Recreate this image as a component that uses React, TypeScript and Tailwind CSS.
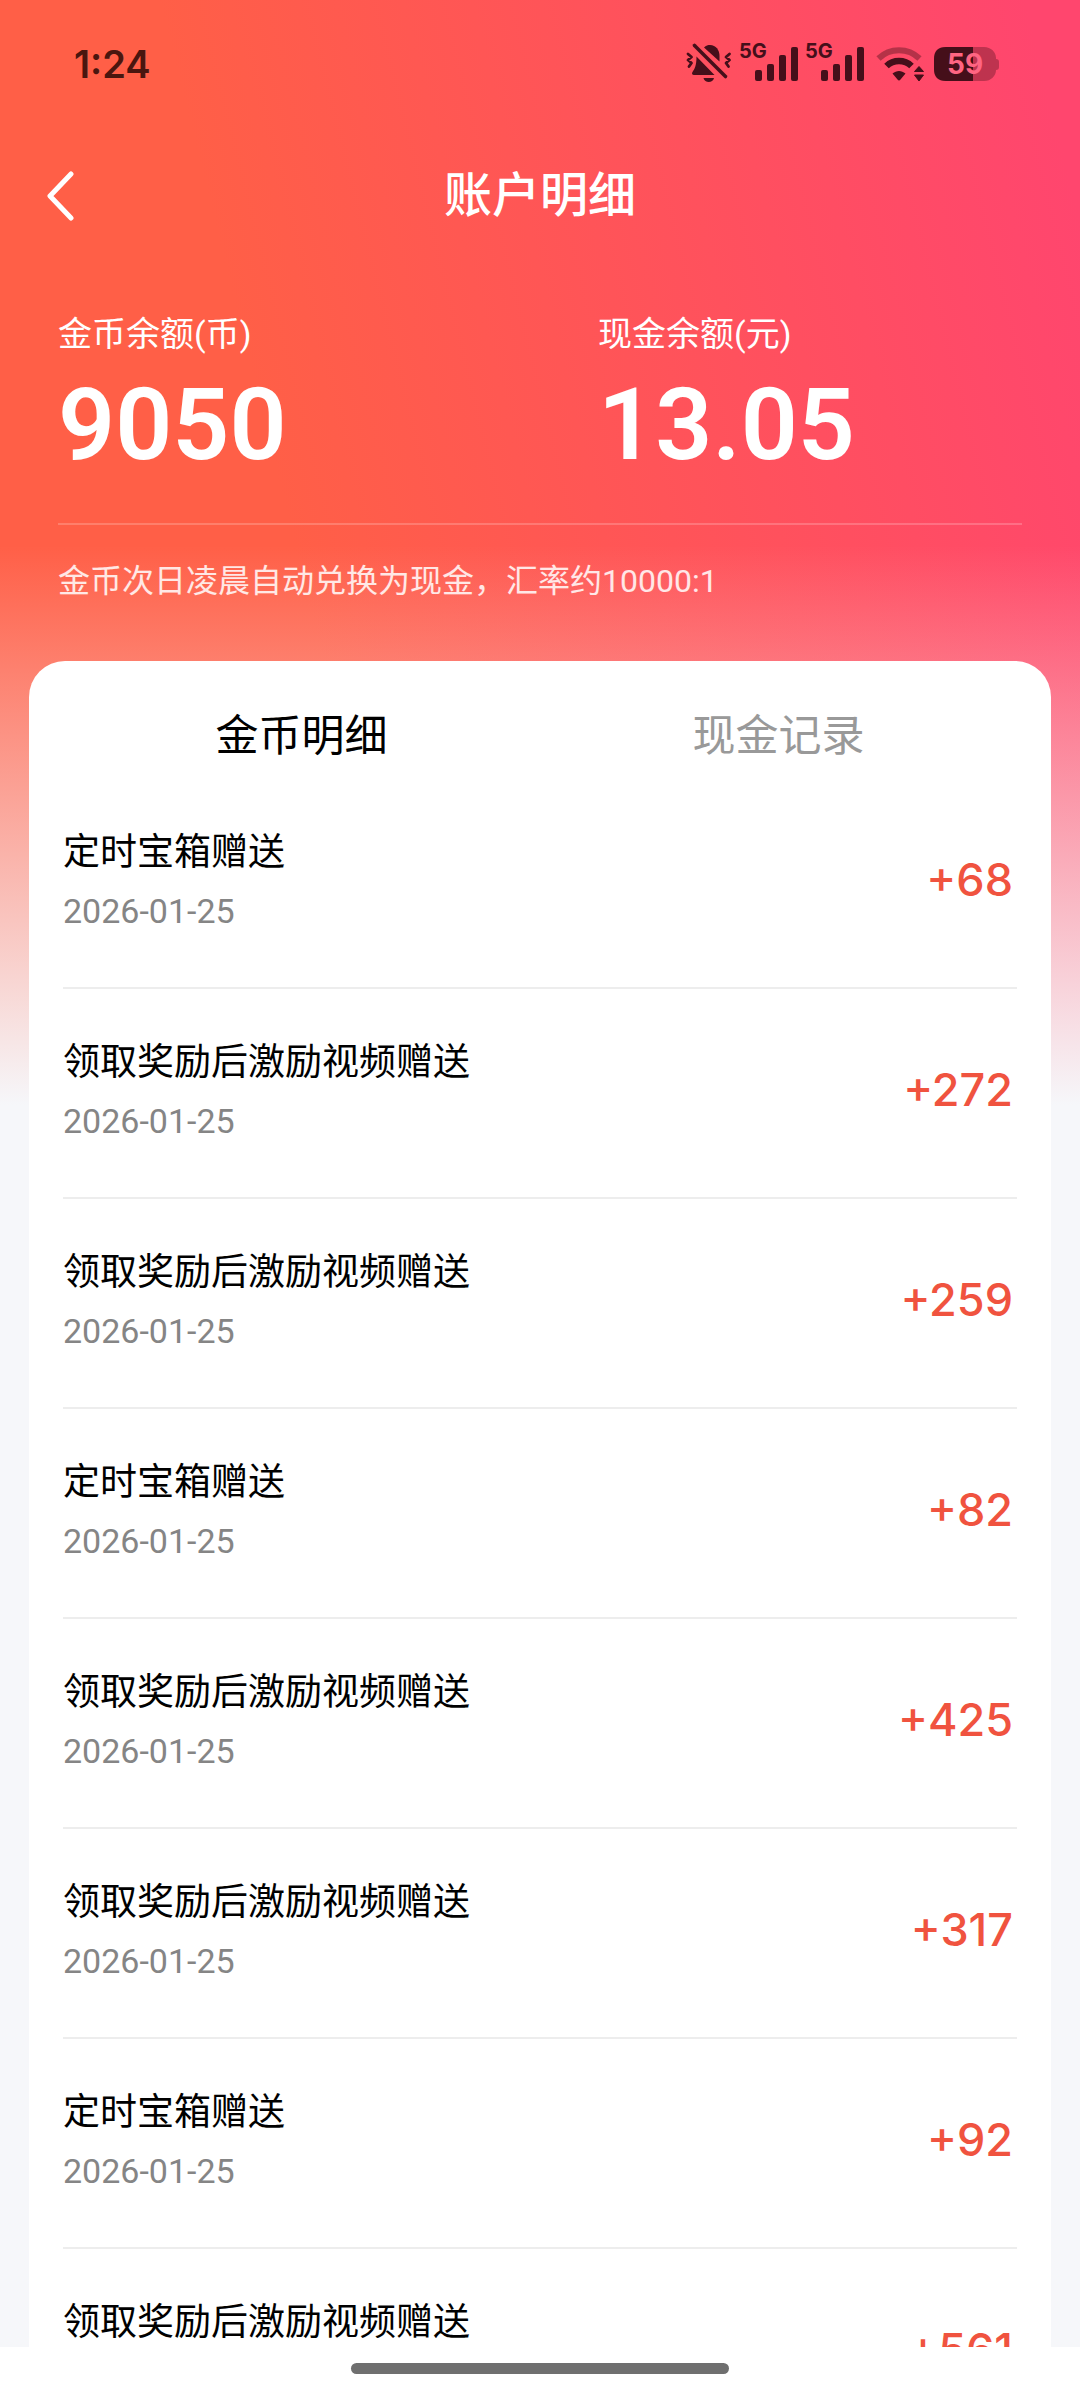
import { useState } from "react"

interface LedgerEntry {
  id: number
  title: string
  date: string
  amount: number
}

const COIN_ENTRIES: LedgerEntry[] = [
  { id: 1, title: "定时宝箱赠送", date: "2026-01-25", amount: 68 },
  { id: 2, title: "领取奖励后激励视频赠送", date: "2026-01-25", amount: 272 },
  { id: 3, title: "领取奖励后激励视频赠送", date: "2026-01-25", amount: 259 },
  { id: 4, title: "定时宝箱赠送", date: "2026-01-25", amount: 82 },
  { id: 5, title: "领取奖励后激励视频赠送", date: "2026-01-25", amount: 425 },
  { id: 6, title: "领取奖励后激励视频赠送", date: "2026-01-25", amount: 317 },
  { id: 7, title: "定时宝箱赠送", date: "2026-01-25", amount: 92 },
  { id: 8, title: "领取奖励后激励视频赠送", date: "2026-01-25", amount: 561 },
]

const TABS = [
  { key: "coin", label: "金币明细" },
  { key: "cash", label: "现金记录" },
]

function MutedBellIcon() {
  return (
    <svg width="46" height="40" viewBox="0 0 46 40" fill="currentColor" aria-hidden="true">
      <path d="M18 5.5C20 3.5 22 3 24 3c6 0 9.500 5 9.500 11v5.500z" />
      <path d="M10.500 14.500 28.500 33H8c-2 0-2.500-1.500-1.500-3 2-3 4-6 4-15.500z" />
      <path d="M17.500 36h10.500c-1 5.300-9.500 5.300-10.500 0z" />
      <g fill="none" stroke="currentColor" strokeLinecap="round" strokeLinejoin="round">
        <path d="M8.500 3.500 39.500 34.500" strokeWidth="3.600" />
        <path d="M2 12l3.500 3-3.500 3 3.500 3-2.500 3.500M43.500 12l-3.500 3 3.500 3-3.500 3 2.500 3.500" strokeWidth="2.800" />
      </g>
    </svg>
  )
}

function SignalIcon() {
  return (
    <svg width="58" height="40" viewBox="0 0 58 40" fill="currentColor" className="overflow-visible" aria-label="5G">
      <text x="-1" y="16" className="font-['Inter'] text-[20px] font-bold">
        5G
      </text>
      <rect x="15" y="28" width="7" height="11" rx="2" />
      <rect x="27" y="22" width="7" height="17" rx="2" />
      <rect x="39" y="13" width="7" height="26" rx="2" />
      <rect x="51" y="5" width="7" height="34" rx="2" />
    </svg>
  )
}

function WifiIcon() {
  return (
    <svg width="48" height="40" viewBox="0 0 48 40" aria-hidden="true">
      <path d="M2.500 16.500a29.500 29.500 0 0 1 41 0" fill="none" stroke="currentColor" strokeOpacity="0.400" strokeWidth="6" />
      <path d="M10.500 24a18 18 0 0 1 25 0" fill="none" stroke="currentColor" strokeWidth="6.500" />
      <path d="M16.500 31.500c4-3.500 9-3.500 13 0l-5 6c-1 1.200-2 1.200-3 0z" fill="currentColor" />
      <path d="M38.500 29.500 43 24.500l4.500 5zM38.500 33h9L43 39z" fill="currentColor" stroke="currentColor" strokeLinejoin="round" />
    </svg>
  )
}

function BatteryIcon() {
  return (
    <svg width="66" height="40" viewBox="0 0 66 40" aria-label="59%">
      <path d="M12 5h38c7 0 12 5 12 11v1c2 0 3 1 3 3v5c0 2-1 3-3 3 0 6-5 11-12 11H12C4 39 0 35 0 27V17C0 9 4 5 12 5z" fill="currentColor" fillOpacity="0.350" />
      <path d="M39 5H12C4 5 0 9 0 17v10c0 8 4 12 12 12h27z" fill="currentColor" />
      <text x="13" y="32" fill="#ff6582" className="font-['Inter'] text-[28px] font-bold">
        59
      </text>
    </svg>
  )
}

function StatusBar() {
  return (
    <div className="flex items-center justify-between pt-[39px] pr-20 pl-[74px]">
      <span className="pt-1 font-['Inter'] text-[38px] leading-[42px] font-semibold text-[#4a160f]">1:24</span>
      <div className="flex items-center gap-2 text-[#450f1a]">
        <MutedBellIcon />
        <SignalIcon />
        <SignalIcon />
        <div className="ml-1 flex gap-[10px]">
          <WifiIcon />
          <BatteryIcon />
        </div>
      </div>
    </div>
  )
}

interface BalanceProps {
  label: string
  value: string
}

function Balance({ label, value }: BalanceProps) {
  return (
    <div className="flex flex-1 flex-col pl-[58px]">
      <span className="text-[34px] leading-[50px]">{label}</span>
      <span className="mt-[10px] text-[100px] leading-[112px] font-semibold">{value}</span>
    </div>
  )
}

function EntryRow({ entry }: { entry: LedgerEntry }) {
  return (
    <li className="flex shrink-0 items-center justify-between border-b-2 border-[#ededed] pt-12 pr-1 pb-[54px]">
      <div className="flex flex-col gap-[10px]">
        <span className="text-[37px] leading-[52px] text-black">{entry.title}</span>
        <time className="text-[34px] leading-[44px] text-[#858585]">{entry.date}</time>
      </div>
      <span className="font-['Inter'] text-[45px] leading-[56px] font-medium text-[#f0533f]">+{entry.amount}</span>
    </li>
  )
}

export default function App() {
  const [tab, setTab] = useState("coin")

  return (
    <div className="flex h-screen flex-col overflow-hidden bg-[#f6f7fa] bg-[image:linear-gradient(to_bottom,transparent_545px,#f6f7fa_1105px),linear-gradient(76deg,#ff5f47_32%,#ff466e_96%)] bg-[length:100%_1105px] bg-no-repeat font-['Roboto','Noto_Sans_CJK_SC',sans-serif]">
      <StatusBar />

      {/* Nav bar */}
      <header className="mt-[71px] grid grid-cols-[1fr_auto_1fr] items-center px-[46px] text-white">
        <button aria-label="返回" className="justify-self-start">
          <svg width="28" height="50" viewBox="0 0 28 50" fill="none" stroke="currentColor" strokeWidth="5" strokeLinecap="round" strokeLinejoin="round">
            <path d="M25 3 4 25l21 22" />
          </svg>
        </button>
        <h1 className="text-[48px] leading-[80px] font-medium">账户明细</h1>
      </header>

      {/* Balances */}
      <section className="mt-[73px] text-white">
        <div className="flex">
          <Balance label="金币余额(币)" value="9050" />
          <Balance label="现金余额(元)" value="13.05" />
        </div>
        <p className="mx-[58px] mt-[42px] border-t-2 border-white/20 pt-8 text-[32px] leading-[48px] text-white/85">
          金币次日凌晨自动兑换为现金，汇率约10000:1
        </p>
      </section>

      {/* Ledger */}
      <main className="mx-[29px] mt-14 flex min-h-0 flex-1 flex-col overflow-hidden rounded-t-[36px] bg-white px-[34px]">
        <div role="tablist" className="grid shrink-0 grid-cols-2 pt-[45px] pb-[13px]">
          {TABS.map(({ key, label }) => (
            <button
              key={key}
              role="tab"
              aria-selected={tab === key}
              onClick={() => setTab(key)}
              className={tab === key ? "text-[43px] leading-[60px] text-black" : "text-[43px] leading-[60px] text-[#999999]"}
            >
              {label}
            </button>
          ))}
        </div>
        <ul className="flex flex-col">
          {COIN_ENTRIES.map((entry) => (
            <EntryRow key={entry.id} entry={entry} />
          ))}
        </ul>
      </main>

      {/* Home indicator */}
      <footer className="flex h-[45px] shrink-0 justify-center bg-white pt-4">
        <div className="h-[11px] w-[35%] rounded-full bg-[#6f6f6f]" />
      </footer>
    </div>
  )
}
